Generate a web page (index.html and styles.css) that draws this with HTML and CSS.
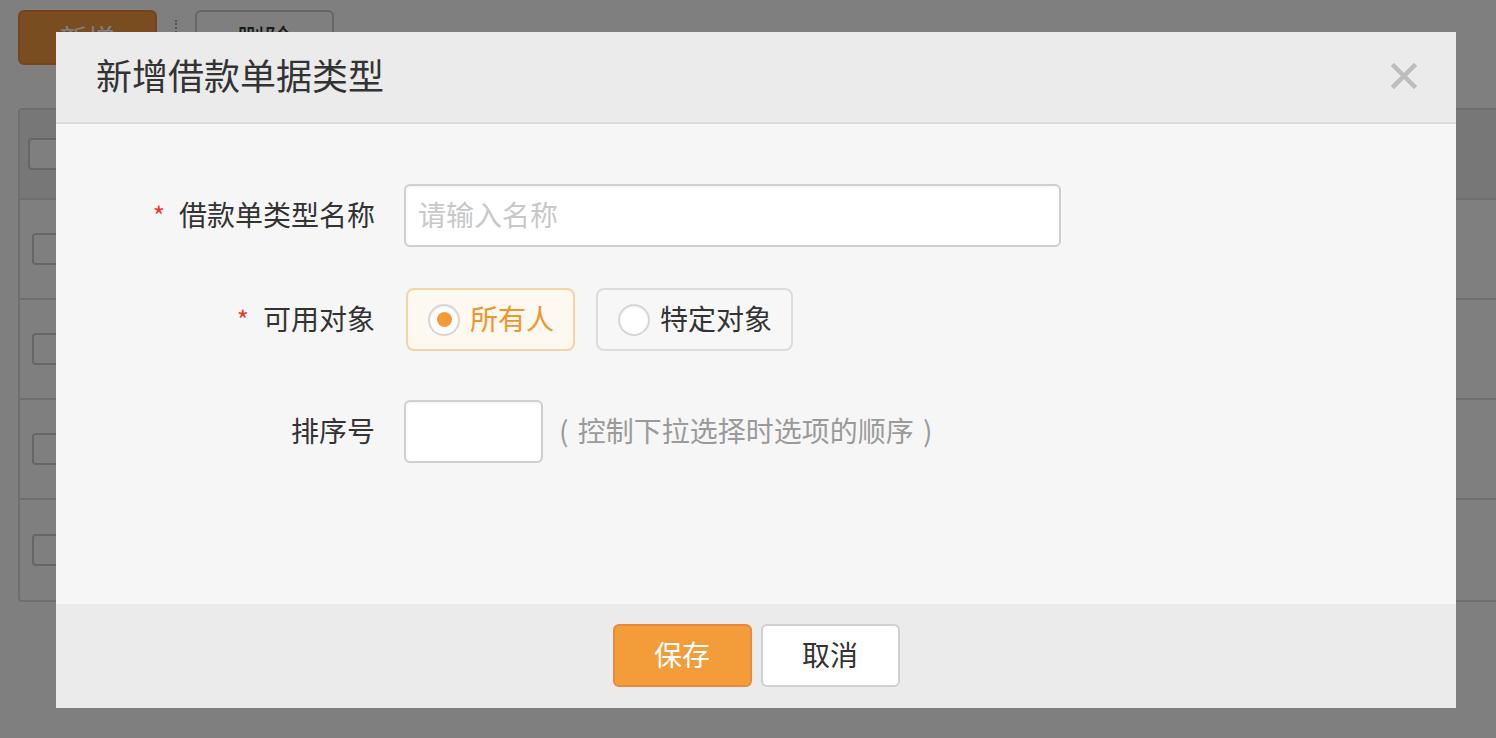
FILE: index.html
```html
<!DOCTYPE html>
<html lang="zh-CN">
<head>
<meta charset="utf-8">
<title>新增借款单据类型</title>
<link rel="stylesheet" href="styles.css">
</head>
<body>
<div class="page">
  <div class="toolbar">
    <button class="tb-btn tb-primary">新增</button>
    <span class="tb-sep"></span>
    <button class="tb-btn">删除</button>
  </div>
  <div class="table">
    <div class="trow thead"><span class="cb"></span></div>
    <div class="trow"><span class="cb"></span></div>
    <div class="trow"><span class="cb"></span></div>
    <div class="trow"><span class="cb"></span></div>
    <div class="trow"><span class="cb"></span></div>
  </div>
</div>

<div class="mask"></div>

<div class="modal">
  <div class="modal-header">
    <h2 class="modal-title">新增借款单据类型</h2>
    <span class="modal-close" aria-label="关闭">
      <svg width="26" height="26" viewBox="0 0 26 26"><path d="M3 3 L23 23 M23 3 L3 23" stroke="#bdbdbd" stroke-width="4.5" stroke-linecap="square"/></svg>
    </span>
  </div>
  <div class="modal-body">
    <div class="form-row row-name">
      <label class="form-label"><span class="req">*</span>借款单类型名称</label>
      <div class="form-ctrl">
        <input class="text-input name-input" type="text" placeholder="请输入名称">
      </div>
    </div>
    <div class="form-row row-target">
      <label class="form-label"><span class="req">*</span>可用对象</label>
      <div class="form-ctrl radios">
        <span class="radio-box checked"><span class="radio"><span class="dot"></span></span><span class="radio-text">所有人</span></span>
        <span class="radio-box"><span class="radio"></span><span class="radio-text">特定对象</span></span>
      </div>
    </div>
    <div class="form-row row-sort">
      <label class="form-label">排序号</label>
      <div class="form-ctrl">
        <input class="text-input sort-input" type="text">
        <span class="hint">( 控制下拉选择时选项的顺序 )</span>
      </div>
    </div>
  </div>
  <div class="modal-footer">
    <button class="btn btn-save">保存</button>
    <button class="btn btn-cancel">取消</button>
  </div>
</div>
</body>
</html>
```

FILE: styles.css
```css
* { box-sizing: border-box; }
html, body { margin: 0; padding: 0; }
body {
  width: 1496px;
  height: 738px;
  overflow: hidden;
  background: #fff;
  font-family: "Noto Sans CJK SC", "Noto Sans", sans-serif;
  color: #333;
}

/* background page */
.page { padding: 10px 0 0 18px; }
.toolbar { display: flex; align-items: center; height: 55px; }
.tb-btn {
  width: 139px; height: 55px;
  border: 2px solid #ccc; border-radius: 6px;
  background: #fff; color: #333;
  font-family: inherit; font-size: 28px;
}
.tb-primary { background: #f39a3e; border-color: #e8883a; color: #fff; }
.tb-sep {
  width: 0; height: 16px; margin: 10px 18px 0 18px;
  border-left: 2px dotted #aaa; align-self: flex-start;
}
.table {
  margin-top: 43px;
  border: 2px solid #ddd; border-right: none;
  border-radius: 4px 0 0 4px;
}
.trow {
  height: 100px; border-bottom: 2px solid #ddd;
  display: flex; align-items: center; padding-left: 12px;
}
.trow:last-child { border-bottom: none; }
.thead { height: 90px; background: #eee; padding-left: 8px; }
.cb {
  width: 32px; height: 32px; border: 2px solid #ccc; border-radius: 4px; background: #fff;
}

.mask {
  position: fixed; inset: 0;
  background: rgba(0, 0, 0, 0.5);
}

/* modal */
.modal {
  position: absolute;
  left: 56px; top: 32px;
  width: 1400px; height: 676px;
  display: flex; flex-direction: column;
  background: #f6f6f6;
}
.modal-header {
  height: 92px;
  background: #ebebeb;
  border-bottom: 2px solid #dcdcdc;
  display: flex; align-items: center; justify-content: space-between;
  padding: 0 38px 0 40px;
}
.modal-title {
  margin: 0; font-size: 36px; font-weight: 400; color: #333;
  padding-bottom: 6px;
}
.modal-close { display: flex; width: 26px; height: 26px; margin-top: -2px; margin-right: 1px; }

.modal-body { flex: 1; padding-top: 60px; }
.form-row { display: flex; align-items: center; }
.form-label {
  width: 320px; text-align: right; font-size: 28px; color: #333;
  padding-right: 1px; padding-bottom: 4px;
}
.req { color: #e8392b; margin-right: 14px; font-size: 26px; }
.form-ctrl { margin-left: 28px; display: flex; align-items: center; }
.row-target { margin-top: 41px; }
.row-sort { margin-top: 49px; }

.text-input {
  height: 63px;
  border: 2px solid #cfcfcf; border-radius: 6px;
  background: #fff;
  box-shadow: inset 0 1px 3px rgba(0,0,0,0.06);
  font-family: inherit; font-size: 28px; color: #333;
  padding: 0 12px 4px 12px;
  outline: none;
}
.text-input::placeholder { color: #c8c8c8; }
.name-input { width: 657px; }
.sort-input { width: 139px; }
.hint { margin-left: 16px; font-size: 28px; color: #9a9a9a; word-spacing: 3px; padding-bottom: 4px; }

.radios { gap: 21px; margin-left: 30px; }
.radio-box {
  height: 63px;
  display: inline-flex; align-items: center;
  padding: 0 19px 0 20px;
  border: 2px solid #dcdcdc; border-radius: 8px;
  background: #f7f7f7;
  font-size: 28px; color: #333;
}
.radio-text { padding-bottom: 4px; }
.radio-box.checked { background: #fdf8f0; border-color: #f2d5a6; color: #f0952d; }
.radio {
  width: 32px; height: 32px; border-radius: 50%;
  background: #fff; border: 2px solid #d6d6d6;
  box-shadow: inset 0 1px 2px rgba(0,0,0,0.08);
  margin-right: 10px;
  display: flex; align-items: center; justify-content: center;
}
.dot { width: 15px; height: 15px; border-radius: 50%; background: #f39a3a; }

.modal-footer {
  height: 104px;
  background: #ebebeb;
  display: flex; justify-content: center; align-items: flex-start;
  gap: 9px;
  padding-top: 20px;
}
.btn {
  width: 139px; height: 63px;
  border-radius: 6px;
  font-family: inherit; font-size: 28px;
  padding: 0 0 4px 0;
}
.btn-save { background: #f39c3a; border: 2px solid #e88a3a; color: #fff; }
.btn-cancel { background: #fff; border: 2px solid #d0d0d0; color: #333; }
```
